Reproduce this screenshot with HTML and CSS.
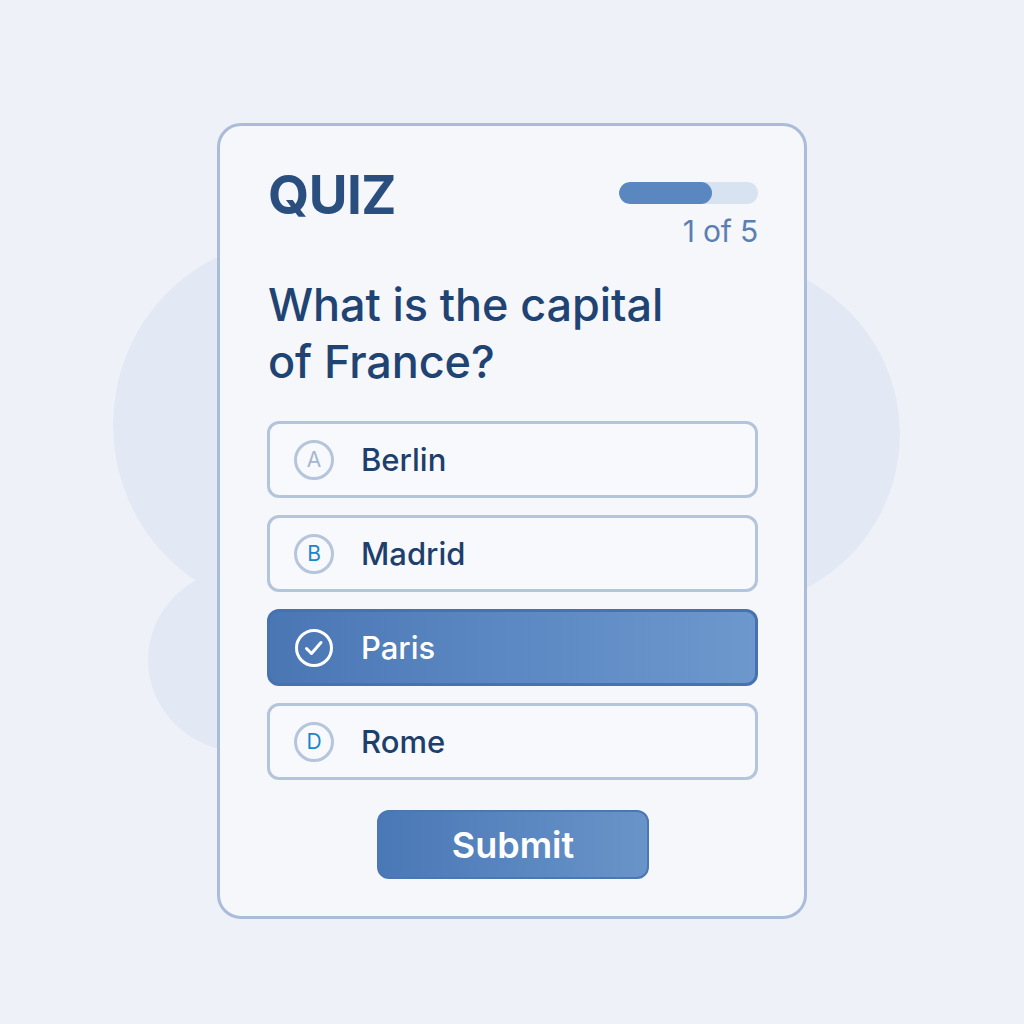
FILE: index.html
```html
<!DOCTYPE html>
<html lang="en">
<head>
<meta charset="utf-8">
<title>Quiz</title>
<link rel="stylesheet" href="styles.css">
</head>
<body>
<div class="stage">
  <div class="blob blob-left"></div>
  <div class="blob blob-bottom"></div>
  <div class="blob blob-right"></div>
  <main class="card">
    <header class="card-head">
      <h1 class="title">QUIZ</h1>
      <div class="progress">
        <div class="track"><div class="fill" style="width: 67%"></div></div>
        <div class="count">1 of 5</div>
      </div>
    </header>
    <h2 class="question">What is the capital of France?</h2>
    <ul class="options">
      <li class="option">
        <span class="badge badge-muted">A</span>
        <span class="label">Berlin</span>
      </li>
      <li class="option">
        <span class="badge">B</span>
        <span class="label">Madrid</span>
      </li>
      <li class="option option-selected">
        <svg class="check" width="40" height="40" viewBox="0 0 40 40">
          <circle cx="20" cy="20" r="17.5" fill="none" stroke="#fff" stroke-width="3"/>
          <path d="M12.5 20.5 L17.5 25.5 L27 14.5" fill="none" stroke="#fff" stroke-width="3" stroke-linecap="round" stroke-linejoin="round"/>
        </svg>
        <span class="label">Paris</span>
      </li>
      <li class="option">
        <span class="badge">D</span>
        <span class="label">Rome</span>
      </li>
    </ul>
    <div class="actions">
      <button class="submit">Submit</button>
    </div>
  </main>
</div>
</body>
</html>
```
FILE: styles.css
```css
* { box-sizing: border-box; }

html, body {
  margin: 0;
  padding: 0;
}

body {
  background: #eef2f8;
  font-family: Inter, "Noto Sans", Roboto, sans-serif;
}

.stage {
  position: relative;
  width: 1024px;
  height: 1024px;
  padding-top: 123px;
  overflow: hidden;
}

.blob {
  position: absolute;
  border-radius: 50%;
  background: #e3e9f4;
}

.blob-left {
  left: 113px;
  top: 240px;
  width: 360px;
  height: 370px;
}

.blob-bottom {
  left: 148px;
  top: 568px;
  width: 190px;
  height: 184px;
}

.blob-right {
  left: 540px;
  top: 258px;
  width: 360px;
  height: 352px;
}

.card {
  position: relative;
  width: 590px;
  height: 796px;
  margin-left: 217px;
  background: #f5f7fb;
  border: 3px solid #aabcd7;
  border-radius: 24px;
  padding: 42px 46px 36px 48px;
}

.card-head {
  display: flex;
  justify-content: space-between;
  align-items: flex-start;
}

.title {
  margin: 0;
  font-size: 53px;
  line-height: 55px;
  font-weight: 700;
  color: #2a4f7f;
  letter-spacing: -0.5px;
}

.progress {
  display: flex;
  flex-direction: column;
  align-items: flex-end;
  padding-top: 14px;
}

.track {
  width: 139px;
  height: 22px;
  border-radius: 11px;
  background: #d8e3f2;
  overflow: hidden;
}

.fill {
  height: 100%;
  border-radius: 11px;
  background: #5b87c1;
}

.count {
  margin-top: 13px;
  font-size: 30px;
  line-height: 29px;
  color: #5a80b3;
  letter-spacing: -0.2px;
}

.question {
  margin: 30px 0 0 0;
  max-width: 430px;
  font-size: 45px;
  line-height: 57px;
  font-weight: 500;
  color: #1f4372;
  letter-spacing: -0.1px;
}

.options {
  list-style: none;
  margin: 31px 0 0 -1px;
  padding: 0;
  display: flex;
  flex-direction: column;
  gap: 17px;
}

.option {
  height: 77px;
  border: 3px solid #b3c4dc;
  border-radius: 12px;
  background: #f8f9fc;
  display: flex;
  align-items: center;
  padding-left: 24px;
}

.badge {
  width: 40px;
  height: 40px;
  border-radius: 50%;
  border: 3px solid #b5c5dc;
  display: flex;
  align-items: center;
  justify-content: center;
  font-size: 21px;
  color: #1b86c9;
  flex: none;
}

.badge-muted {
  color: #a4b6d0;
}

.check {
  flex: none;
  display: block;
}

.label {
  margin-left: 27px;
  font-size: 31px;
  font-weight: 500;
  color: #1e3f6c;
}

.option-selected {
  border-color: #4673af;
  background: linear-gradient(90deg, #4a77b4 0%, #5c88c3 50%, #6d98cd 100%);
}

.option-selected .label {
  color: #ffffff;
}

.actions {
  display: flex;
  justify-content: center;
  margin-top: 30px;
}

.submit {
  width: 272px;
  height: 69px;
  border: 2px solid #4c77b1;
  border-radius: 12px;
  background: linear-gradient(90deg, #4a78b6 0%, #6994c9 100%);
  color: #ffffff;
  font-family: Inter, "Noto Sans", Roboto, sans-serif;
  font-size: 36px;
  font-weight: 600;
  cursor: pointer;
}
```
